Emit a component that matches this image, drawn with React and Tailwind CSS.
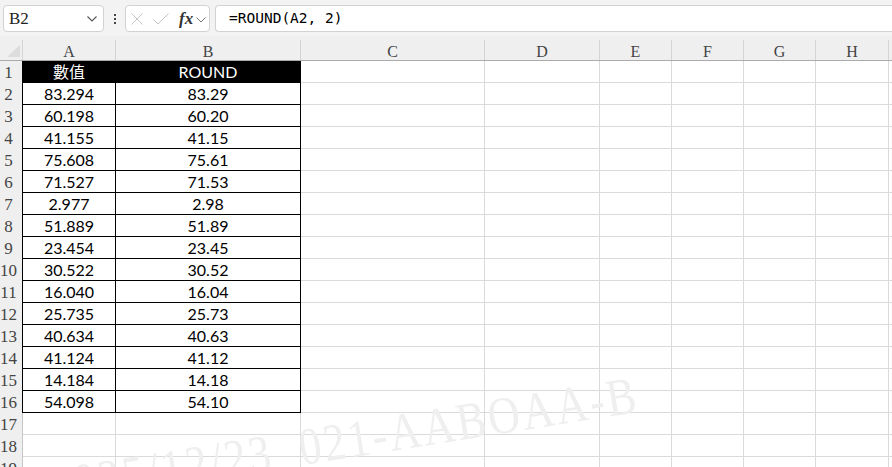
import React from "react";

const cols = [
  { l: "A", w: "w-[93px]" },
  { l: "B", w: "w-[185px]" },
  { l: "C", w: "w-[184px]" },
  { l: "D", w: "w-[115px]" },
  { l: "E", w: "w-[72px]" },
  { l: "F", w: "w-[72px]" },
  { l: "G", w: "w-[72px]" },
  { l: "H", w: "w-[73px]" },
  { l: "I", w: "w-[100px]" },
];

const colA = ["83.294","60.198","41.155","75.608","71.527","2.977","51.889","23.454","30.522","16.040","25.735","40.634","41.124","14.184","54.098"];
const colB = ["83.29","60.20","41.15","75.61","71.53","2.98","51.89","23.45","30.52","16.04","25.73","40.63","41.12","14.18","54.10"];

function Toolbar() {
  return (
    <div className="h-[36px] bg-[#f3f3f3] flex items-start pt-[5px] pl-[3px]">
      <div className="w-[101px] h-[27px] shrink-0 bg-white border border-[#d2d2d2] rounded-[4px] flex items-center justify-between pl-[5px] pr-[6px]">
        <span className="font-['Liberation_Serif',serif] text-[17px] leading-none text-[#222]">B2</span>
        <svg width="10" height="6" viewBox="0 0 10 6" className="mt-[1px]">
          <path d="M0.5 0.5 L5 5 L9.5 0.5" fill="none" stroke="#555" strokeWidth="1.1" />
        </svg>
      </div>
      <div className="w-[21px] h-[27px] shrink-0 flex flex-col items-center justify-center gap-[2px]">
        <div className="w-[2px] h-[2px] bg-[#444]" />
        <div className="w-[2px] h-[2px] bg-[#444]" />
        <div className="w-[2px] h-[2px] bg-[#444]" />
      </div>
      <div className="w-[85px] h-[27px] shrink-0 bg-white border border-[#d2d2d2] rounded-[4px] flex items-center pl-[4px]">
        <svg width="14" height="14" viewBox="0 0 14 14">
          <path d="M1.5 1.5 L12.5 12.5 M12.5 1.5 L1.5 12.5" fill="none" stroke="#c4c4c4" strokeWidth="1" />
        </svg>
        <svg width="16" height="12" viewBox="0 0 16 12" className="ml-[9px]">
          <path d="M0.5 6.5 L5 11 L15.5 0.5" fill="none" stroke="#c4c4c4" strokeWidth="1" />
        </svg>
        <span className="ml-[10px] font-['Liberation_Serif',serif] italic font-bold text-[17px] leading-none text-[#333]">fx</span>
        <svg width="10" height="6" viewBox="0 0 10 6" className="ml-[3px] mt-[2px]">
          <path d="M0.5 0.5 L5 5 L9.5 0.5" fill="none" stroke="#777" strokeWidth="1" />
        </svg>
      </div>
      <div className="flex-1 h-[27px] ml-[5px] bg-white border border-r-0 border-[#d2d2d2] rounded-l-[4px] flex items-center pl-[13px]">
        <span className="font-['DejaVu_Sans_Mono',monospace] text-[14.5px] leading-none text-black">=ROUND(A2, 2)</span>
      </div>
    </div>
  );
}

function HeaderRow() {
  return (
    <div className="flex h-[25px] bg-[#efefef] border-b border-[#ababab]">
      <div className="w-[23px] shrink-0 h-full flex">
        <svg width="22" height="24" viewBox="0 0 22 24" className="shrink-0">
          <path d="M7 21 L20 21 L20 9 Z" fill="#dcdcdc" />
        </svg>
        <div className="w-px h-[20px] self-end bg-[#d4d4d4]" />
      </div>
      {cols.map((c) => (
        <div key={c.l} className={`${c.w} shrink-0 h-full flex`}>
          <div className="flex-1 flex justify-center items-center pt-[8px] font-['Liberation_Serif',serif] text-[16px] leading-none text-[#444]">
            {c.l}
          </div>
          <div className="w-px h-[20px] self-end bg-[#d4d4d4]" />
        </div>
      ))}
    </div>
  );
}

function DataRow({ r }) {
  const inTable = r <= 16;
  return (
    <div className="flex h-[22px]">
      <div
        className={`w-[23px] shrink-0 bg-[#efefef] border-r ${inTable ? "border-black" : "border-[#c6c6c6]"} flex items-center justify-center pr-[5px] font-['Liberation_Serif',serif] text-[17px] leading-none text-[#444]`}
      >
        {r}
      </div>
      {cols.map((c, i) => {
        const table = inTable && i < 2;
        let content = null;
        let cls = `${c.w} shrink-0 h-full border-r border-b flex items-center justify-center font-['Lato','Noto_Sans_CJK_TC',sans-serif] text-[16px] leading-none `;
        if (table) {
          cls += "border-black ";
          if (r === 1) {
            cls += "bg-black text-white ";
            content = i === 0 ? "數值" : "ROUND";
          } else {
            cls += "bg-white text-black ";
            content = i === 0 ? colA[r - 2] : colB[r - 2];
          }
        } else {
          cls += "border-[#dadada] bg-white";
        }
        return (
          <div key={c.l} className={cls}>
            {content}
          </div>
        );
      })}
    </div>
  );
}

export default function App() {
  const rows = Array.from({ length: 19 }, (_, i) => i + 1);
  return (
    <div className="relative w-[892px] h-[467px] overflow-hidden bg-white">
      <Toolbar />
      <div className="flex flex-col">
        <HeaderRow />
        {rows.map((r) => (
          <DataRow key={r} r={r} />
        ))}
      </div>
      <div className="pointer-events-none absolute left-[46px] top-[462px] origin-top-left rotate-[-9deg] scale-y-[1.2] whitespace-pre font-['Liberation_Serif',serif] text-[44px] tracking-[2.5px] leading-none text-[#efefef]">
        2025/12/23  021-AABOAA-B
      </div>
    </div>
  );
}
